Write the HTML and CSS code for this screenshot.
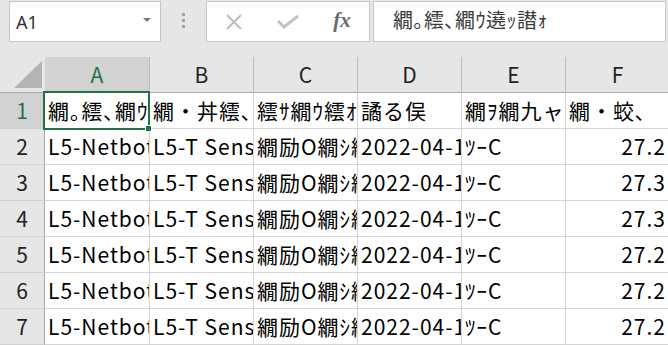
FILE: index.html
```html
<!DOCTYPE html>
<html lang="ja">
<head>
  <meta charset="UTF-8">
  <title>Sheet</title>
  <link rel="stylesheet" href="styles.css">
</head>
<body>
  <div class="toolbar">
    <div class="namebox">
      <span>A1</span>
      <svg width="8" height="4" viewBox="0 0 8 4"><polygon points="0,0 8,0 4,4" fill="#7a7a7a"/></svg>
    </div>
    <div class="grip"><i></i><i></i><i></i></div>
    <div class="fbuttons">
      <div class="btn">
        <svg width="18" height="18" viewBox="0 0 18 18"><path d="M2 2 L16 16 M16 2 L2 16" stroke="#bdbdbd" stroke-width="2" fill="none"/></svg>
      </div>
      <div class="btn">
        <svg width="22" height="14" viewBox="0 0 22 14"><path d="M1 6 L7 12 L21 1" stroke="#c2c2c2" stroke-width="3" fill="none"/></svg>
      </div>
      <div class="btn fx">fx</div>
    </div>
    <div class="finput">繝｡繧､繝ｳ遶ｯ譛ｫ</div>
  </div>

  <div class="sheet">
    <div class="h corner">
      <svg width="44" height="35" viewBox="0 0 44 35"><polygon points="41,4 41,31 13,31" fill="#b4b4b4"/></svg>
    </div>
    <div class="h on">A</div>
    <div class="h">B</div>
    <div class="h">C</div>
    <div class="h">D</div>
    <div class="h">E</div>
    <div class="h">F</div>

    <div class="r on">1</div>
    <div class="c">繝｡繧､繝ｳ遶ｯ譛ｫ</div>
    <div class="c">繝・丼繧､繧ｹ</div>
    <div class="c">繧ｻ繝ｳ繧ｵ繝ｼ</div>
    <div class="c">譎る俣</div>
    <div class="c">繝ｦ繝九ャ</div>
    <div class="c">繝・蛟､</div>

    <div class="r">2</div>
    <div class="c">L5-Netbot-01</div>
    <div class="c">L5-T Sensor</div>
    <div class="c">繝励Ο繝ｼ繝・</div>
    <div class="c">2022-04-15 10:00</div>
    <div class="c">ﾂｰC</div>
    <div class="c num">27.2</div>

    <div class="r">3</div>
    <div class="c">L5-Netbot-01</div>
    <div class="c">L5-T Sensor</div>
    <div class="c">繝励Ο繝ｼ繝・</div>
    <div class="c">2022-04-15 10:10</div>
    <div class="c">ﾂｰC</div>
    <div class="c num">27.3</div>

    <div class="r">4</div>
    <div class="c">L5-Netbot-01</div>
    <div class="c">L5-T Sensor</div>
    <div class="c">繝励Ο繝ｼ繝・</div>
    <div class="c">2022-04-15 10:20</div>
    <div class="c">ﾂｰC</div>
    <div class="c num">27.3</div>

    <div class="r">5</div>
    <div class="c">L5-Netbot-01</div>
    <div class="c">L5-T Sensor</div>
    <div class="c">繝励Ο繝ｼ繝・</div>
    <div class="c">2022-04-15 10:30</div>
    <div class="c">ﾂｰC</div>
    <div class="c num">27.2</div>

    <div class="r">6</div>
    <div class="c">L5-Netbot-01</div>
    <div class="c">L5-T Sensor</div>
    <div class="c">繝励Ο繝ｼ繝・</div>
    <div class="c">2022-04-15 10:40</div>
    <div class="c">ﾂｰC</div>
    <div class="c num">27.2</div>

    <div class="r">7</div>
    <div class="c">L5-Netbot-01</div>
    <div class="c">L5-T Sensor</div>
    <div class="c">繝励Ο繝ｼ繝・</div>
    <div class="c">2022-04-15 10:50</div>
    <div class="c">ﾂｰC</div>
    <div class="c num">27.2</div>

    <div class="selection"><span class="handle"></span></div>
  </div>
</body>
</html>
```

FILE: styles.css
```css
* {
  margin: 0;
  padding: 0;
  box-sizing: border-box;
}

body {
  width: 668px;
  height: 345px;
  overflow: hidden;
  background-color: white;
  font-family: "Noto Sans CJK JP", sans-serif;
  color: black;
}

.toolbar {
  display: flex;
  align-items: flex-start;
  height: 57px;
  padding: 1px 0 0 9px;
  background-color: #e6e6e6;
}

.namebox {
  width: 152px;
  height: 41px;
  border: 1px solid #c6c6c6;
  background-color: white;
  display: flex;
  align-items: center;
  justify-content: space-between;
  padding: 0 9px 0 6px;
  font-family: "Noto Sans", sans-serif;
  font-size: 18px;
  color: #333;
}

.namebox svg {
  margin-top: -3px;
}

.grip {
  width: 45px;
  height: 41px;
  display: flex;
  flex-direction: column;
  align-items: center;
  justify-content: center;
  gap: 3px;
  padding-bottom: 3px;
}

.grip i {
  display: block;
  width: 3px;
  height: 3px;
  background-color: #a3a3a3;
}

.fbuttons {
  width: 164px;
  height: 41px;
  border: 1px solid #c6c6c6;
  background-color: white;
  display: flex;
}

.fbuttons .btn {
  flex: 1;
  display: flex;
  align-items: center;
  justify-content: center;
}

.fbuttons .fx {
  font-family: "Liberation Serif", serif;
  font-style: italic;
  font-weight: bold;
  font-size: 21px;
  color: #6a6a6a;
  padding-bottom: 2px;
}

.finput {
  margin-left: 3px;
  width: 293px;
  height: 41px;
  border: 1px solid #c6c6c6;
  background-color: white;
  padding-left: 19px;
  font-size: 20px;
  line-height: 36px;
  letter-spacing: 0.5px;
  color: #3b3b3b;
  white-space: nowrap;
  overflow: hidden;
}

.sheet {
  position: relative;
  display: grid;
  grid-template-columns: 45px 105px repeat(5, 104px);
  grid-auto-rows: 36px;
}

.h,
.r,
.c {
  font-size: 21px;
  line-height: 35px;
  white-space: nowrap;
  overflow: hidden;
}

.h {
  background-color: #e6e6e6;
  text-align: center;
  color: #222;
  border-right: 1px solid #bdbdbd;
  border-bottom: 1px solid #ababab;
}

.h.corner {
  border-right: none;
  line-height: 0;
}

.r {
  background-color: #e6e6e6;
  text-align: center;
  color: #222;
  border-right: 1px solid #a8a8a8;
  border-bottom: 1px solid #d0d0d0;
}

.h.on,
.r.on {
  background-color: #d2d2d2;
  color: #217346;
}

.c {
  padding: 0 3px;
  letter-spacing: 1px;
  border-right: 1px solid #d4d4d4;
  border-bottom: 1px solid #d4d4d4;
}

.c.num {
  text-align: right;
  padding-right: 3px;
}

/* active cell frame */
.selection {
  position: absolute;
  left: 43px;
  top: 34px;
  width: 107px;
  height: 39px;
  border: 2px solid #217346;
}

.handle {
  position: absolute;
  right: -4px;
  bottom: -4px;
  width: 7px;
  height: 7px;
  background-color: #217346;
  border: 1px solid white;
}
```
